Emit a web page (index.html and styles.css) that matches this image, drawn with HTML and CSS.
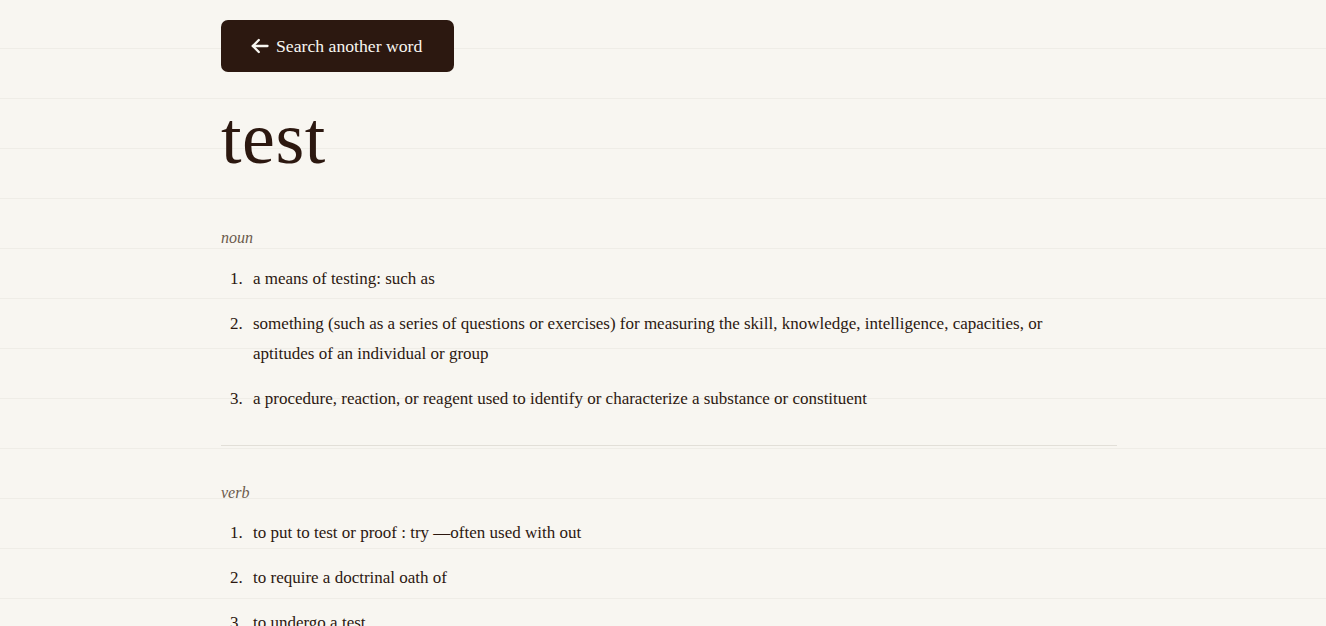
FILE: index.html
```html
<!DOCTYPE html>
<html lang="en">
<head>
<meta charset="utf-8">
<title>test — Dictionary</title>
<link rel="stylesheet" href="styles.css">
</head>
<body>
<main class="page">
  <button class="back-btn" type="button">
    <svg class="back-icon" viewBox="0 0 18 16" width="18" height="16" fill="none" stroke="currentColor" stroke-width="2.3" stroke-linecap="round" stroke-linejoin="round"><path d="M16.5 8H1.8"/><path d="M7.8 2L1.8 8l6 6"/></svg>
    <span>Search another word</span>
  </button>

  <h1 class="word">test</h1>

  <section class="meaning">
    <p class="pos">noun</p>
    <ol class="defs">
      <li>a means of testing: such as</li>
      <li>something (such as a series of questions or exercises) for measuring the skill, knowledge, intelligence, capacities, or aptitudes of an individual or group</li>
      <li>a procedure, reaction, or reagent used to identify or characterize a substance or constituent</li>
    </ol>
  </section>

  <section class="meaning">
    <p class="pos">verb</p>
    <ol class="defs">
      <li>to put to test or proof : try —often used with out</li>
      <li>to require a doctrinal oath of</li>
      <li>to undergo a test</li>
    </ol>
  </section>
</main>
</body>
</html>
```

FILE: styles.css
```css
html, body {
  margin: 0;
  padding: 0;
}

body {
  background-color: #f8f6f1;
  background-image: repeating-linear-gradient(
    to bottom,
    transparent 0,
    transparent 48px,
    #efede7 48px,
    #efede7 49px,
    transparent 49px,
    transparent 50px
  );
  color: #2c1810;
  font-family: "Liberation Serif", "DejaVu Serif", serif;
  overflow: hidden;
}

.page {
  width: 896px;
  margin: 0 auto;
  padding: 20px 0 40px 12px;
}

.back-btn {
  display: inline-flex;
  align-items: center;
  gap: 7px;
  height: 52px;
  padding: 0 32px 0 30px;
  border: none;
  border-radius: 7px;
  background: #2c1810;
  color: #f8f6f1;
  font-family: inherit;
  font-size: 17.7px;
  cursor: pointer;
}

.back-icon {
  display: block;
  flex: none;
}

.word {
  margin: 22px 0 10px;
  font-size: 74px;
  font-weight: 400;
  line-height: 1.2;
  letter-spacing: 0.5px;
  color: #2c1810;
}

.meaning {
  padding: 33px 0 31px;
}

.meaning + .meaning {
  border-top: 1px solid #e2dfd8;
  padding-top: 35px;
}

.pos {
  margin: 0 0 14px;
  font-size: 16px;
  line-height: 24px;
  font-style: italic;
  color: #6b5a4c;
}

.meaning + .meaning .pos {
  margin-bottom: 13px;
}

.defs {
  list-style: none;
  margin: 0;
  padding: 0 28px 0 0;
  counter-reset: def;
}

.defs li {
  display: flex;
  counter-increment: def;
  font-size: 17px;
  line-height: 30px;
  margin-bottom: 15px;
}

.defs li:last-child {
  margin-bottom: 0;
}

.defs li::before {
  content: counter(def) ".";
  flex: none;
  width: 23px;
  padding-left: 9px;
}
```
